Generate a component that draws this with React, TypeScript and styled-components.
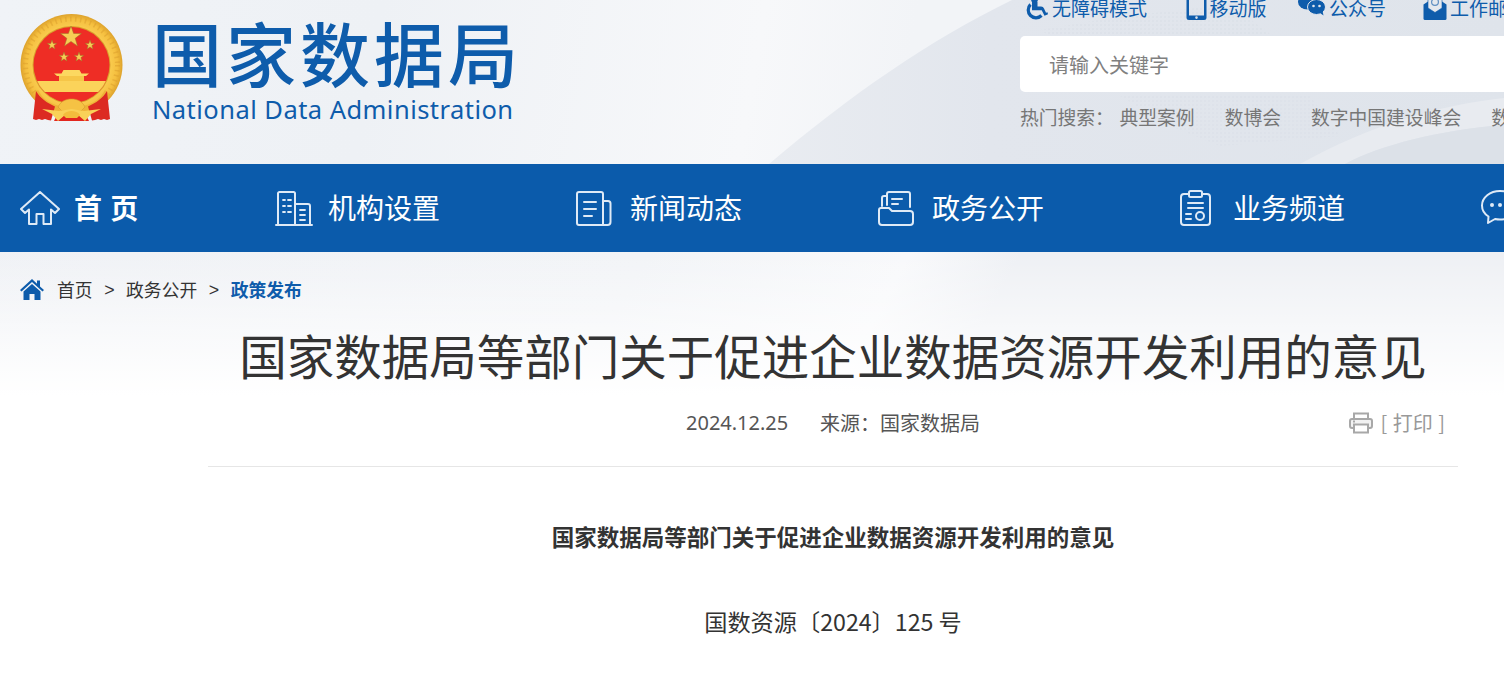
import React from "react";
import styled, { createGlobalStyle } from "styled-components";

const FONT = `"Noto Sans CJK SC", "Liberation Sans", sans-serif`;

const Global = createGlobalStyle`
  html, body { margin: 0; padding: 0; background: #fff; overflow: hidden; }
  body { font-family: ${FONT}; width: 1504px; height: 678px; }
`;

const Page = styled.div`
  width: 1504px;
  height: 678px;
  overflow: hidden;
  position: relative;
  background:
    linear-gradient(180deg, rgba(255,255,255,0) 252px, #fff 395px),
    linear-gradient(118deg, #eff1f5 0%, #f2f4f7 42%, #f8f9fb 56%, #eef0f4 62%, #eef0f4 100%);
`;

const Header = styled.header`
  height: 164px;
  position: relative;
  overflow: hidden;
  display: flex;
  justify-content: space-between;
  padding-left: 20px;
  background: linear-gradient(100deg, #f0f3f7 0%, #eef1f5 25%, #f7f8fa 50%, #f2f4f7 60%);
`;

const Swoosh = styled.svg`
  position: absolute;
  inset: 0;
  width: 100%;
  height: 100%;
`;

const Brand = styled.div`
  position: relative;
  display: flex;
  align-items: flex-start;
  padding-top: 14px;
  gap: 28px;
`;

const BrandText = styled.div`
  display: flex;
  flex-direction: column;
  align-items: flex-start;
`;

const BrandName = styled.div`
  font-size: 70px;
  line-height: 76px;
  font-weight: 500;
  letter-spacing: 4px;
  color: #0e5cab;
  white-space: nowrap;
`;

const BrandEnglish = styled.div`
  font-family: "Noto Sans", "Liberation Sans", sans-serif;
  font-size: 25.5px;
  line-height: 32px;
  margin-top: 3px;
  letter-spacing: 0.46px;
  color: #0e5cab;
  white-space: nowrap;
`;

const Tools = styled.div`
  position: relative;
  width: 484px;
  flex: none;
`;

const ToolRow = styled.div`
  display: flex;
  margin-top: -8px;
  height: 32px;
  align-items: center;
  white-space: nowrap;
`;

const ToolLink = styled.a<{ $w: number; $pad?: number; $gap?: number }>`
  display: flex;
  flex: none;
  box-sizing: border-box;
  align-items: center;
  width: ${(p) => p.$w}px;
  padding-left: ${(p) => p.$pad ?? 0}px;
  gap: ${(p) => p.$gap ?? 3}px;
  font-size: 19px;
  line-height: 32px;
  color: #0e5cab;
`;

const SearchBox = styled.div`
  margin-top: 12px;
  height: 56px;
  width: 520px;
  box-sizing: border-box;
  background: #fff;
  border-radius: 5px;
  padding-left: 29px;
  font-size: 20px;
  line-height: 58px;
  color: #808080;
`;

const HotRow = styled.div`
  display: flex;
  margin-top: 10px;
  font-size: 18.8px;
  line-height: 30px;
  color: #767676;
  white-space: nowrap;
`;

const HotLabel = styled.span`
  width: 99.5px;
  flex: none;
`;

const HotItem = styled.span`
  margin-right: 30px;
  flex: none;
`;

const Nav = styled.nav`
  height: 88px;
  background: #0b5bab;
  display: flex;
  padding-left: 20px;
  white-space: nowrap;
`;

const NavItem = styled.a<{ $w: number; $gap: number }>`
  display: flex;
  flex: none;
  align-items: center;
  width: ${(p) => p.$w}px;
  gap: ${(p) => p.$gap}px;
  color: #fff;
  font-size: 28px;
`;

const NavLabel = styled.span<{ $strong?: boolean }>`
  padding-bottom: 2px;
  font-weight: ${(p) => (p.$strong ? 700 : 400)};
  word-spacing: ${(p) => (p.$strong ? 2 : 0)}px;
`;

const Crumbs = styled.div`
  display: flex;
  align-items: center;
  height: 28px;
  margin-top: 23px;
  padding-left: 20px;
  font-size: 17.8px;
  color: #333;
  white-space: nowrap;
`;

const CrumbLink = styled.a`
  color: #333;
  flex: none;
`;

const CrumbSep = styled.span`
  width: 33.5px;
  text-align: center;
  flex: none;
  font-family: "Liberation Sans", sans-serif;
  padding-top: 2px;
`;

const CrumbNow = styled.a`
  color: #0e5cab;
  font-weight: 700;
  flex: none;
`;

const Article = styled.article`
  margin-left: 208px;
  width: 1250px;
`;

const Title = styled.h1`
  margin: 20px 0 0;
  text-align: center;
  font-size: 47.5px;
  line-height: 64px;
  font-weight: 400;
  color: #333;
  white-space: nowrap;
`;

const Meta = styled.div`
  height: 71px;
  margin-top: 9px;
  box-sizing: border-box;
  padding-top: 11px;
  border-bottom: 1px solid #e6e6e6;
  display: flex;
  align-items: flex-start;
  padding-left: 478px;
  font-size: 20px;
  line-height: 32px;
  color: #555;
`;

const MetaDate = styled.span`
  font-family: "Noto Sans", "Liberation Sans", sans-serif;
  width: 134px;
  flex: none;
`;

const MetaSource = styled.span`
  flex: none;
`;

const Print = styled.div`
  margin-left: auto;
  margin-right: 13px;
  display: flex;
  align-items: center;
  gap: 8px;
  height: 32px;
  color: #999;
  font-size: 20px;
  word-spacing: 1px;
`;

const Sub = styled.h2`
  margin: 51px 0 0;
  text-align: center;
  font-size: 22.5px;
  line-height: 36px;
  font-weight: 700;
  color: #333;
  white-space: nowrap;
`;

const DocNo = styled.p`
  margin: 49px 0 0;
  text-align: center;
  font-size: 23.2px;
  line-height: 36px;
  color: #333;
`;

const Glyph = styled.svg`
  flex: none;
  display: block;
`;

const EmblemArt = styled(Glyph)`
  margin-left: -1px;
`;

const HomeGlyph = styled(Glyph)`
  margin-right: 13px;
`;

/* ——— drawings ——— */

const Star = ({ cx, cy, r }: { cx: number; cy: number; r: number }) => {
  const pts: string[] = [];
  for (let i = 0; i < 10; i++) {
    const a = -Math.PI / 2 + (i * Math.PI) / 5;
    const rr = i % 2 === 0 ? r : r * 0.4;
    pts.push(`${(cx + rr * Math.cos(a)).toFixed(2)},${(cy + rr * Math.sin(a)).toFixed(2)}`);
  }
  return <polygon points={pts.join(" ")} fill="#f7cd55" stroke="#9a7427" strokeWidth="0.5" />;
};

const Emblem = () => (
  <EmblemArt width="105" height="110" viewBox="0 0 105 110">
    <defs>
      <radialGradient id="ring" cx="50%" cy="50%" r="50%">
        <stop offset="76%" stopColor="#f9cb4e" />
        <stop offset="90%" stopColor="#f5bf3f" />
        <stop offset="100%" stopColor="#dda22c" />
      </radialGradient>
      <clipPath id="inner"><circle cx="52.5" cy="51" r="38" /></clipPath>
      <clipPath id="upper"><rect x="0" y="0" width="105" height="92" /></clipPath>
    </defs>
    <g clipPath="url(#upper)">
      <circle cx="52.5" cy="51" r="51" fill="url(#ring)" />
      <circle cx="52.5" cy="51" r="46" fill="none" stroke="#d6982a" strokeWidth="5" strokeDasharray="1.500 3.500" opacity=".45" />
    </g>
    <circle cx="52.5" cy="51" r="39" fill="#d9a02c" />
    <circle cx="52.5" cy="51" r="38" fill="#ee2d25" />
    <Star cx={52} cy={23} r={11} />
    <Star cx={33} cy={31} r={5} />
    <Star cx={71} cy={31} r={5} />
    <Star cx={45} cy={43} r={5} />
    <Star cx={60} cy={43} r={5} />
    <g clipPath="url(#inner)">
      <path d="M38 62l-3-2.500h7.500l2-3.500h16l2 3.500H70L67 62z" fill="#fcd860" />
      <path d="M40 62h25v5H40z" fill="#f6c648" />
      <path d="M18 67h69v11H18z" fill="#fbd35a" />
      <path d="M18 78h69v10H18z" fill="#ee2d25" />
    </g>
    <path d="M19 76c5 10 14 17 33.500 17S81 86 86 76l4 4c-6 14-18 21-37.500 21S20 94 15 80z" fill="#eeb238" />
    <path d="M17 77l-3 28 3 1 3-1 3 1 3-1 3 1 3 .5 4-14C28 89 21 84 17 77z" fill="#dc2a22" />
    <path d="M88 77l3 28-3 1-3-1-3 1-3-1-3 1-3 .5-4-14C77 89 84 84 88 77z" fill="#dc2a22" />
    <path d="M40 97h25l5 10H35z" fill="#e2261f" />
    <path d="M39 93c3-6 8-8 13.500-8S63 87 66 93l-4 4H43z" fill="#f5c244" stroke="#d3982b" strokeWidth=".6" />
    <path d="M23 95l17 2 12.500-2L65 97l17-2-10 5-6 7-7-6H46l-7 6-6-7z" fill="#f9d158" />
    <path d="M44 101c2-3 5-4 8.500-4s6.500 1 8.500 4l-3 3H47z" fill="#f3bd3d" />
  </EmblemArt>
);

const Wheelchair = () => (
  <Glyph width="24" height="24" viewBox="0 0 24 24" fill="none">
    <circle cx="10.500" cy="3.500" r="3.400" fill="#0e5cab" />
    <path d="M8 6h5.500v4.500h3.500c1.600 0 2.400.7 3 2l2 4.300 1.500-.5.500 2-3.500 1.500-2.800-5.600H8z" fill="#0e5cab" />
    <path d="M6.500 8.500a7.700 7.700 0 1 0 11 11" stroke="#0e5cab" strokeWidth="3.200" />
  </Glyph>
);
const Phone = () => (
  <Glyph width="21" height="24" viewBox="0 0 21 24">
    <path fillRule="evenodd" d="M3 0h15a2.500 2.500 0 0 1 2.500 2.500v19A2.500 2.500 0 0 1 18 24H3a2.500 2.500 0 0 1-2.500-2.500v-19A2.500 2.500 0 0 1 3 0zm0 2v17.500h15V2zm7.500 18.300a1.300 1.300 0 1 0 0 2.600 1.300 1.300 0 0 0 0-2.600z" fill="#0e5cab" />
  </Glyph>
);
const Wechat = () => (
  <Glyph width="28" height="22" viewBox="0 0 28 22">
    <ellipse cx="9.500" cy="5" rx="9.500" ry="7.500" fill="#0e5cab" />
    <ellipse cx="18.500" cy="10" rx="9" ry="7.500" fill="#0e5cab" stroke="#e2e6ed" strokeWidth="1" />
    <circle cx="15.500" cy="9" r="1.300" fill="#e2e6ed" />
    <circle cx="21.500" cy="9" r="1.300" fill="#e2e6ed" />
    <path d="M22 16l3.500 2.500-1-4.500z" fill="#0e5cab" />
  </Glyph>
);
const MailIcon = () => (
  <Glyph width="24" height="24" viewBox="0 0 24 24">
    <path d="M.5 8.500L5 5.500h14l4.500 3V22.500A1.500 1.500 0 0 1 22 24H2a1.500 1.500 0 0 1-1.500-1.500z" fill="#0e5cab" />
    <path d="M5 0h14v12l-7 4.500L5 12z" fill="#e4e8ee" stroke="#0e5cab" strokeWidth=".6" />
    <circle cx="12" cy="6" r="3.400" fill="none" stroke="#5f8fc2" strokeWidth="1.200" />
  </Glyph>
);

const s = { fill: "none", stroke: "#dfeaf6", strokeWidth: 2, strokeLinejoin: "round", strokeLinecap: "round" } as const;

const HomeLine = () => (
  <Glyph width="40" height="34" viewBox="0 0 40 34">
    <path {...s} d="M1 18L20 1l19 17-4 4-4-3.500V33h-7.500V23h-7v10H9V18.500L5 22z" />
  </Glyph>
);
const Building = () => (
  <Glyph width="38" height="35" viewBox="0 0 38 35">
    <path {...s} d="M1 34h36M3 34V2.500A1.500 1.500 0 0 1 4.500 1h14A1.500 1.500 0 0 1 20 2.500V34M20 13h13a2 2 0 0 1 2 2v19" />
    <path {...s} strokeWidth={1.8} d="M8 9h2M13 9h3M8 15h2M13 15h3M8 21h2M13 21h3M25 19h5M25 24h5M25 29h5" />
  </Glyph>
);
const News = () => (
  <Glyph width="36" height="35" viewBox="0 0 36 35">
    <path {...s} d="M27 34H3a2 2 0 0 1-2-2V3a2 2 0 0 1 2-2h22a2 2 0 0 1 2 2zM27 10h5a2.500 2.500 0 0 1 2.500 2.500V31a3 3 0 0 1-3 3H27" />
    <path {...s} d="M8 11h12M8 18h12M8 25h8" />
  </Glyph>
);
const Folder = () => (
  <Glyph width="36" height="35" viewBox="0 0 36 35">
    <path {...s} d="M9 14V3a2 2 0 0 1 2-2h19a2 2 0 0 1 2 2v13" />
    <path {...s} d="M9 5H6a2 2 0 0 0-2 2v8" />
    <path {...s} d="M14 8h10M14 13h6" />
    <path {...s} d="M1 19a2 2 0 0 1 2-2h8l3 3h18a3 3 0 0 1 3 3v8a3 3 0 0 1-3 3H4a3 3 0 0 1-3-3z" />
  </Glyph>
);
const Clipboard = () => (
  <Glyph width="31" height="36" viewBox="0 0 31 36">
    <path {...s} d="M9 4H4a3 3 0 0 0-3 3v25a3 3 0 0 0 3 3h23a3 3 0 0 0 3-3V7a3 3 0 0 0-3-3h-5" />
    <rect {...s} x="9" y="1" width="13" height="6" rx="1.500" />
    <path {...s} d="M8 13h15M8 18h15M6 24h5M6 29h5" />
    <circle {...s} cx="20" cy="26" r="4" />
  </Glyph>
);
const Chat = () => (
  <Glyph width="38" height="36" viewBox="0 0 38 36">
    <path {...s} d="M19 1C9 1 1 7.500 1 15.500c0 4.500 2.500 8.500 6.500 11L7 33l7-4c1.500.3 3 .5 5 .5 10 0 18-6 18-14S29 1 19 1z" />
    <circle cx="11" cy="15" r="2" fill="#dfeaf6" />
    <circle cx="19" cy="15" r="2" fill="#dfeaf6" />
    <circle cx="27" cy="15" r="2" fill="#dfeaf6" />
  </Glyph>
);
const HomeSolid = () => (
  <HomeGlyph width="24" height="21" viewBox="0 0 24 21">
    <path d="M12 0L0 11l1.500 1.500L12 3l10.500 9.500L24 11l-4-3.600V1.500h-3v3.200z" fill="#0e5cab" />
    <path d="M12 5L3.500 12.500V21H9.500v-6h5v6h6v-8.500z" fill="#0e5cab" />
  </HomeGlyph>
);
const Printer = () => (
  <Glyph width="24" height="22" viewBox="0 0 24 22" fill="none" stroke="#a8a8a8" strokeWidth="2">
    <path d="M5 7V1.500h14V7" />
    <rect x="1" y="7" width="22" height="9" rx="2" fill="#f2f2f2" />
    <path d="M5 12.500h14V20.500H5z" fill="#fff" />
    <path d="M4 9.500h2" />
  </Glyph>
);

const App = () => (
  <Page>
    <Global />
    <Header>
      <Swoosh viewBox="0 0 1504 164" preserveAspectRatio="none" aria-hidden>
        <defs>
          <linearGradient id="dark" x1="0" y1="0" x2="1" y2="0">
            <stop offset="0" stopColor="#e9ecf1" />
            <stop offset=".3" stopColor="#e2e6ed" />
            <stop offset="1" stopColor="#dfe4eb" />
          </linearGradient>
          <pattern id="dots" width="4" height="4" patternUnits="userSpaceOnUse">
            <circle cx="1" cy="1" r=".7" fill="#c9d0da" />
          </pattern>
        </defs>
        <path d="M769 164C850 95 930 40 1012 0H1504V164z" fill="url(#dark)" />
        <path d="M1040 30l70-12 120-14 40 30-60 6-40 36-20-10-40 6z" fill="url(#dots)" opacity=".45" />
        <path d="M1120 96h190l30 40-120 10-50-20z" fill="url(#dots)" opacity=".4" />
        <path d="M1300 164C1370 125 1440 105 1504 98V125C1440 130 1380 145 1345 164z" fill="#e8ebf0" />
        <path d="M1345 164C1380 145 1440 130 1504 125V164z" fill="#dce1e8" />
      </Swoosh>
      <Brand>
        <Emblem />
        <BrandText>
          <BrandName>国家数据局</BrandName>
          <BrandEnglish>National Data Administration</BrandEnglish>
        </BrandText>
      </Brand>
      <Tools>
        <ToolRow>
          <ToolLink $w={165.5} $pad={4} $gap={4}><Wheelchair />无障碍模式</ToolLink>
          <ToolLink $w={112.5}><Phone />移动版</ToolLink>
          <ToolLink $w={125}><Wechat />公众号</ToolLink>
          <ToolLink $w={120}><MailIcon />工作邮箱</ToolLink>
        </ToolRow>
        <SearchBox>请输入关键字</SearchBox>
        <HotRow>
          <HotLabel>热门搜索：</HotLabel>
          <HotItem>典型案例</HotItem>
          <HotItem>数博会</HotItem>
          <HotItem>数字中国建设峰会</HotItem>
          <HotItem>数据要素</HotItem>
        </HotRow>
      </Tools>
    </Header>
    <Nav>
      <NavItem $w={255} $gap={14}><HomeLine /><NavLabel $strong>首 页</NavLabel></NavItem>
      <NavItem $w={301} $gap={15}><Building /><NavLabel>机构设置</NavLabel></NavItem>
      <NavItem $w={302} $gap={18}><News /><NavLabel>新闻动态</NavLabel></NavItem>
      <NavItem $w={302} $gap={18}><Folder /><NavLabel>政务公开</NavLabel></NavItem>
      <NavItem $w={301} $gap={22}><Clipboard /><NavLabel>业务频道</NavLabel></NavItem>
      <NavItem $w={200} $gap={14}><Chat /><NavLabel>互动交流</NavLabel></NavItem>
    </Nav>
    <Crumbs>
      <HomeSolid />
      <CrumbLink>首页</CrumbLink>
      <CrumbSep>&gt;</CrumbSep>
      <CrumbLink>政务公开</CrumbLink>
      <CrumbSep>&gt;</CrumbSep>
      <CrumbNow>政策发布</CrumbNow>
    </Crumbs>
    <Article>
      <Title>国家数据局等部门关于促进企业数据资源开发利用的意见</Title>
      <Meta>
        <MetaDate>2024.12.25</MetaDate>
        <MetaSource>来源：国家数据局</MetaSource>
        <Print><Printer />[ 打印 ]</Print>
      </Meta>
      <Sub>国家数据局等部门关于促进企业数据资源开发利用的意见</Sub>
      <DocNo>国数资源〔2024〕125 号</DocNo>
    </Article>
  </Page>
);

export default App;
